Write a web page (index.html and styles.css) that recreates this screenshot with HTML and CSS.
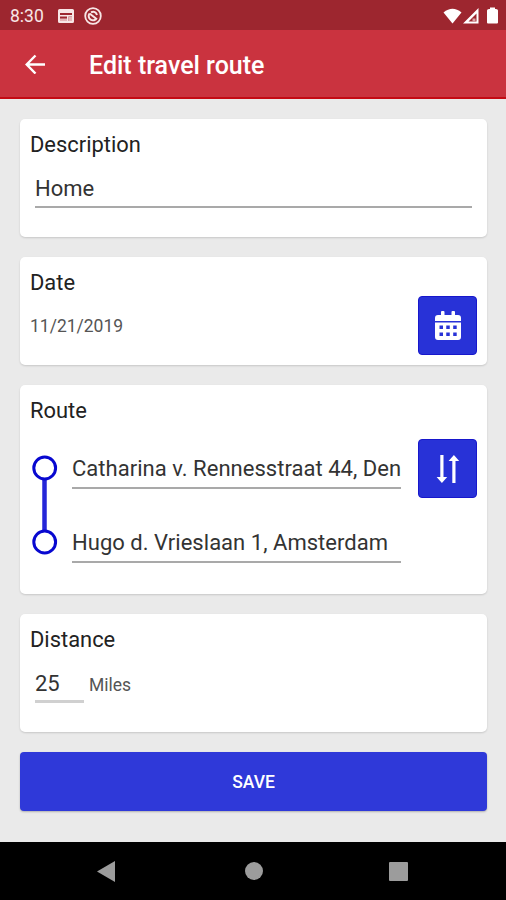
FILE: index.html
```html
<!DOCTYPE html>
<html lang="en">
<head>
<meta charset="utf-8">
<title>Edit travel route</title>
<link rel="stylesheet" href="styles.css">
</head>
<body>
<div class="screen">
  <div class="status-bar">
    <span class="clock">8:30</span>
    <svg class="news-icon" width="16" height="14" viewBox="0 0 16 14"><path fill="#f8e6e6" fill-rule="evenodd" d="M1.500 0h13Q16 0 16 1.500v11Q16 14 14.500 14h-13Q0 14 0 12.500v-11Q0 0 1.500 0zM2 4v2h12V4zM2 7.500V12h7V7.500zM10.500 7.500V12H14V7.500z"/><path fill="#e5b6b9" d="M2 9.500h7V12H2zM10.500 7.500H14V12h-3.500z"/></svg>
    <svg class="sync-icon" width="18" height="18" viewBox="0 0 18 18" fill="none" stroke="#f8e6e6"><circle cx="9" cy="9" r="7.800" stroke-width="1.800"/><path stroke-width="2" d="M5.500 6.500A4.300 4.300 0 1 0 12.800 11M5.500 6.500l6.500 5M7 5.300Q11.500 3.500 13 8"/></svg>
    <svg class="signal-icons" width="56" height="18" viewBox="0 0 56 18" fill="#fff"><path d="M.5 5.500Q9.500-2 18.500 5.500L9.500 16.500z"/><path fill-rule="evenodd" d="M35.500 1v15.500H20zM33.500 6.500l-8 8h8z"/><path fill="#dda6aa" d="M29.500 11.500h3v3h-3z"/><path d="M44 3.500Q44 2 46 2h1V.5h5V2h1q2 0 2 1.500v12q0 1-1 1h-9q-1 0-1-1z"/></svg>
  </div>
  <header class="app-bar">
    <svg width="20" height="20" viewBox="0 0 20 20" fill="none" stroke="#fff" stroke-width="2.400"><path d="M20 10.500H2M10.500 1.500L1.700 10.500l8.800 9"/></svg>
    <h1>Edit travel route</h1>
  </header>
  <main>
    <section class="card description">
      <h2>Description</h2>
      <div class="field">Home</div>
    </section>
    <section class="card date">
      <h2>Date</h2>
      <div class="date-row">
        <span class="small">11/21/2019</span>
        <button class="icon-button" aria-label="Choose date"><svg width="28" height="32" viewBox="0 0 28 32"><path fill="#fff" d="M1 11V8q0-3 3-3h3V2q0-1 1-1h1.500q1 0 1 1v3h7V2q0-1 1-1H20q1 0 1 1v3h3q3 0 3 3v3zM1 12.500h26V27q0 3-3 3H4q-3 0-3-3z"/><path fill="#2832d7" d="M5.500 15.500H9V19H5.500zM12.250 15.500h3.500V19h-3.500zM19.200 15.500h3.500V19h-3.500zM5.500 22.500H9V26H5.500zM12.250 22.500h3.500V26h-3.500zM19.200 22.500h3.500V26h-3.500z"/></svg></button>
      </div>
    </section>
    <section class="card route">
      <h2>Route</h2>
      <div class="route-row">
        <svg class="track" width="26" height="100" viewBox="0 0 26 100" fill="none" stroke="#0808d0"><path stroke="#2526d8" stroke-width="4.500" d="M12.500 25v50"/><circle cx="12.700" cy="13" r="10.900" stroke-width="3"/><circle cx="12.700" cy="87" r="10.900" stroke-width="3"/></svg>
        <div class="stops">
          <div class="field">Catharina v. Rennesstraat 44, Den</div>
          <div class="field">Hugo d. Vrieslaan 1, Amsterdam</div>
        </div>
        <button class="icon-button" aria-label="Swap stops"><svg width="24" height="30" viewBox="0 0 24 30" fill="#fff"><path d="M4.300 1h3.200v22h3.700L5.900 29 .6 23h3.700zM16.300 29h3.200V7h3.700l-5.300-6-5.300 6h3.700z"/></svg></button>
      </div>
    </section>
    <section class="card distance">
      <h2>Distance</h2>
      <div class="distance-row">
        <div class="field">25</div>
        <span class="small">Miles</span>
      </div>
    </section>
    <button class="save">SAVE</button>
  </main>
  <nav>
    <svg width="18" height="21" viewBox="0 0 18 21"><path fill="#9c9c9c" d="M18 0v21L0 10.500z"/></svg>
    <span class="home"></span>
    <span class="recent"></span>
  </nav>
</div>
</body>
</html>
```
FILE: styles.css
```css
* { box-sizing: border-box; }
body { margin: 0; font-family: Roboto, sans-serif; color: #222; background: #eaeaea; }
button { border: 0; padding: 0; font-family: inherit; }
h1, h2 { margin: 0; }
.screen { width: 506px; height: 900px; display: flex; flex-direction: column; overflow: hidden; }
.status-bar { height: 30px; flex: none; background: #9d262f; display: flex; align-items: center; padding: 1px 7px 0 10px; }
.clock { font-size: 17.5px; color: #f8e6e6; width: 48px; }
.news-icon { margin-right: 10px; }
.signal-icons { margin-left: auto; }
.app-bar { height: 69px; flex: none; background: #ca333f; border-bottom: 2px solid #c40a14; display: flex; align-items: center; padding: 1px 0 0 25px; gap: 44px; }
h1 { font-size: 25px; line-height: 32px; font-weight: 500; color: #fff; padding-top: 3px; }
main { flex: 1; padding: 20px 19px 0 20px; display: flex; flex-direction: column; background: #eaeaea; }
.card { background: #fff; border-radius: 5px; margin-bottom: 20px; padding: 12px 10px 0; box-shadow: 0 1px 2px #00000026; flex: none; }
h2 { font-size: 21.9px; line-height: 28px; font-weight: 400; color: #222; }
.description { height: 118px; }
.date { height: 108px; }
.route { height: 209px; }
.distance { height: 118px; }
.field { font-size: 22px; line-height: 28px; color: #333; border-bottom: 2px solid #a9a9a9; white-space: nowrap; }
.description .field { margin: 16px 5px 0 5px; height: 33px; }
.small { font-size: 17.5px; line-height: 24px; color: #555; }
.date-row { display: flex; justify-content: space-between; align-items: center; margin-top: -1px; }
.icon-button { width: 59px; height: 59px; flex: none; border-radius: 4px; background: #2832d7; border: 1px solid #1717cc; display: flex; align-items: center; justify-content: center; }
.route-row { display: flex; align-items: flex-start; padding-top: 14px; }
.track { margin: 16px 15px 0 2px; flex: none; }
.stops { width: 329px; margin: 16px 17px 0 -1px; }
.stops .field { height: 34px; margin-bottom: 40px; letter-spacing: 0.03px; }
.distance-row { display: flex; padding: 16px 0 0 5px; gap: 5px; }
.distance-row .field { width: 49px; height: 33px; border-bottom: 3px solid #d0d0d0; }
.distance-row .small { padding-top: 3px; }
.save { height: 59px; flex: none; border-radius: 4px; background: #2f39d9; color: #fff; font-size: 17.5px; font-weight: 500; box-shadow: 0 1px 2px #00000040; }
nav { height: 58px; flex: none; background: #000; display: flex; align-items: center; padding-left: 97px; }
.home { width: 18px; height: 18px; border-radius: 50%; background: #9c9c9c; margin-left: 129.5px; }
.recent { width: 19px; height: 19px; border-radius: 1px; background: #9c9c9c; margin-left: 126px; }
```
